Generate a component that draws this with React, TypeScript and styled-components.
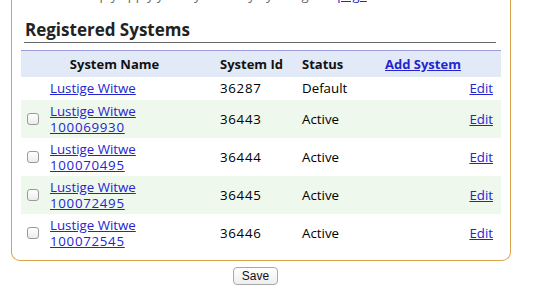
import styled, { createGlobalStyle } from 'styled-components';

const GlobalStyle = createGlobalStyle`
  body {
    margin: 0;
    background: #ffffff;
    font-family: 'Open Sans', 'DejaVu Sans', sans-serif;
    font-size: 13px;
    color: #000;
  }
`;

const Panel = styled.div`
  display: flow-root;
  width: 500px;
  margin-left: 11px;
  padding: 0 9px 8px 9px;
  box-sizing: border-box;
  border: 1px solid #d9a24a;
  border-top: none;
  border-radius: 0 0 9px 9px;
  background: #fff;
`;

const Intro = styled.p`
  margin: -13px 0 0 0;
  padding-left: 56px;
  line-height: 16px;
  font-size: 13px;
  color: #666;
  white-space: nowrap;
  overflow: hidden;
`;

const Heading = styled.h2`
  margin: 17px 5px 0 3px;
  padding: 0 0 2px 1px;
  font-size: 17px;
  line-height: 20px;
  font-weight: 700;
  color: #222;
  border-bottom: 1px solid #666;
`;

const Table = styled.table`
  width: 480px;
  margin-top: 7px;
  border-collapse: collapse;
  table-layout: fixed;
`;

const HeadRow = styled.tr`
  background: #e2eaf8;
  border-top: 1px solid #9d9de0;
  height: 26px;
`;

const Th = styled.th<{ $center?: boolean; $padRight?: number }>`
  padding: 0 ${(p) => p.$padRight ?? 4}px 0 4px;
  text-align: ${(p) => (p.$center ? 'center' : 'left')};
  font-weight: 700;
  font-size: 13px;
  color: #111;
`;

const Row = styled.tr<{ $alt?: boolean; $tall?: boolean }>`
  background: ${(p) => (p.$alt ? '#eef8ec' : '#fff')};
  height: ${(p) => (p.$tall ? 38 : 23)}px;
`;

const Td = styled.td<{ $right?: boolean }>`
  padding: 3px ${(p) => (p.$right ? 8 : 4)}px 3px 4px;
  font-size: 13.3px;
  line-height: 16px;
  vertical-align: middle;
  text-align: ${(p) => (p.$right ? 'right' : 'left')};
`;

const Num = styled.span`
  letter-spacing: 0.7px;
`;

const Link = styled.a<{ $bold?: boolean }>`
  color: #2525cf;
  text-decoration: underline;
  font-weight: ${(p) => (p.$bold ? 700 : 400)};
  cursor: pointer;
`;

const Check = styled.input.attrs({ type: 'checkbox' })`
  appearance: none;
  display: block;
  width: 12px;
  height: 12px;
  margin: 0 0 0 2px;
  border: 1px solid #9a9a9a;
  border-radius: 3px;
  background: linear-gradient(#ffffff, #ececec);
  box-sizing: border-box;
`;

const Footer = styled.div`
  width: 500px;
  margin-left: 11px;
  padding-right: 11px;
  box-sizing: border-box;
  display: flex;
  justify-content: center;
  margin-top: 6px;
`;

const SaveButton = styled.button`
  height: 18px;
  padding: 0 8px;
  font-family: 'Liberation Sans', Arial, sans-serif;
  font-size: 12px;
  color: #111;
  border: 1px solid #a9a9a9;
  border-radius: 4px;
  background: linear-gradient(#ffffff, #eeeeee);
  line-height: 16px;
`;

type System = { name: string; serial?: string; id: string; status: string };

const systems: System[] = [
  { name: 'Lustige Witwe', id: '36287', status: 'Default' },
  { name: 'Lustige Witwe', serial: '100069930', id: '36443', status: 'Active' },
  { name: 'Lustige Witwe', serial: '100070495', id: '36444', status: 'Active' },
  { name: 'Lustige Witwe', serial: '100072495', id: '36445', status: 'Active' },
  { name: 'Lustige Witwe', serial: '100072545', id: '36446', status: 'Active' },
];

export default function App() {
  return (
    <>
      <GlobalStyle />
      <Panel>
        <Intro>
          Simply apply your system key by using this <Link>page</Link>
        </Intro>
        <Heading>Registered Systems</Heading>
        <Table>
          <colgroup>
            <col style={{ width: 25 }} />
            <col style={{ width: 170 }} />
            <col style={{ width: 82 }} />
            <col style={{ width: 83 }} />
            <col style={{ width: 120 }} />
          </colgroup>
          <thead>
            <HeadRow>
              <Th colSpan={2} $center $padRight={12}>
                System Name
              </Th>
              <Th>System Id</Th>
              <Th>Status</Th>
              <Th>
                <Link $bold>Add System</Link>
              </Th>
            </HeadRow>
          </thead>
          <tbody>
            {systems.map((s, i) => (
              <Row key={s.id} $alt={i % 2 === 1} $tall={!!s.serial}>
                <Td>{s.serial ? <Check /> : null}</Td>
                <Td>
                  <Link>
                    {s.name}
                    {s.serial && (
                      <>
                        <br />
                        <Num>{s.serial}</Num>
                      </>
                    )}
                  </Link>
                </Td>
                <Td>
                  <Num>{s.id}</Num>
                </Td>
                <Td>{s.status}</Td>
                <Td $right>
                  <Link>Edit</Link>
                </Td>
              </Row>
            ))}
          </tbody>
        </Table>
      </Panel>
      <Footer>
        <SaveButton>Save</SaveButton>
      </Footer>
    </>
  );
}
